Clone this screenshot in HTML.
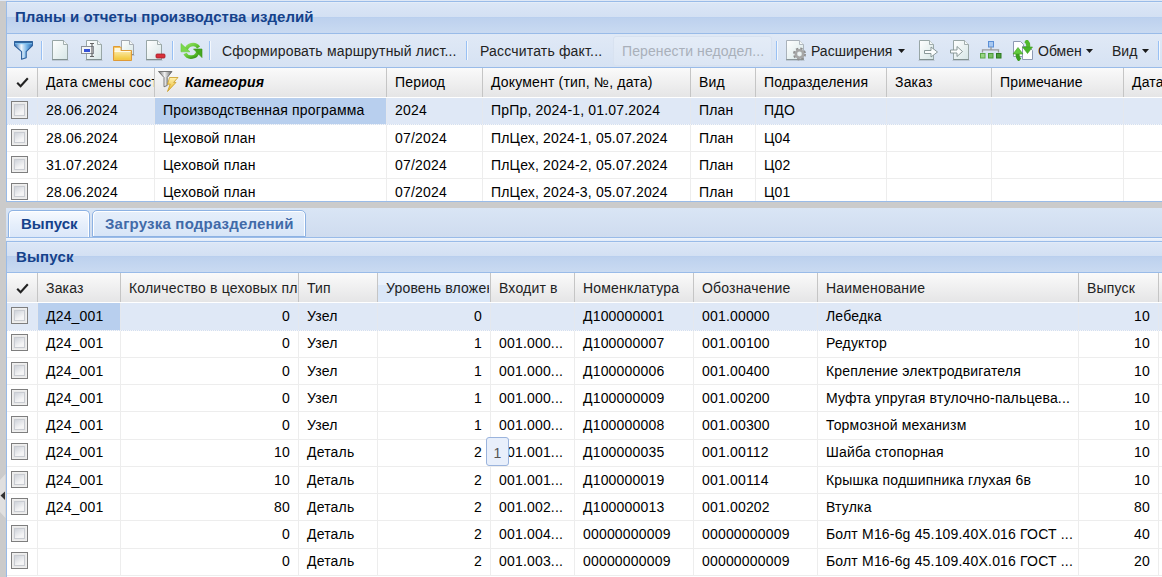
<!DOCTYPE html><html><head><meta charset="utf-8"><style>
*{margin:0;padding:0}
html,body{width:1162px;height:577px;overflow:hidden;background:#cbcbcb}
body{position:relative;font-family:"Liberation Sans",sans-serif}
body>div,body>svg{position:absolute}
.t{white-space:nowrap;font-size:14px;line-height:18px;letter-spacing:.18px}
.cb{width:17px;height:17px;box-sizing:border-box;border:1px solid #7e7e7e;background:#e9e9e9;box-shadow:inset 0 0 0 1px #efefef}.cb::after{content:'';position:absolute;left:2px;top:2px;right:2px;bottom:2px;box-sizing:border-box;border:1px solid #c9ccd2;background:linear-gradient(150deg,#cfd3da,#f4f4f5 70%)}
.tab{box-sizing:border-box;border:1px solid #8db2e3;border-radius:5px 5px 0 0;background:linear-gradient(to bottom,#e6effb,#d7e5f7);box-shadow:inset 1px 1px 0 #fff,inset -1px 0 0 #fff}
.tab.act{border-bottom:none;background:linear-gradient(to bottom,#f7faff 0,#e6effb 50%,#dbe7f9 100%)}
</style></head><body><div style="left:0px;top:0px;width:1162px;height:1px;background:#dfe8f6"></div>
<div style="left:6px;top:1px;width:1156px;height:1px;background:#99bbe8"></div>
<div style="left:6px;top:1px;width:1px;height:201px;background:#99bbe8"></div>
<div style="left:7px;top:2px;width:1155px;height:31px;background:linear-gradient(to bottom,#eef3fa 0,#dbe6f6 1px,#d3e0f3 15px,#b6cdee 15px,#bdd1ee 16px,#c9daf1 31px)"></div>
<div class="t" style="left:15px;top:7px;font-weight:bold;font-size:15px;color:#15428b;line-height:20px;letter-spacing:.06px">Планы и отчеты производства изделий</div>
<div style="left:7px;top:33px;width:1155px;height:1px;background:#99bbe8"></div>
<div style="left:7px;top:34px;width:1155px;height:33px;background:linear-gradient(to bottom,#e0e9f6,#d6e2f3)"></div>
<div style="left:7px;top:67px;width:1155px;height:1px;background:#99bbe8"></div>
<div style="left:41px;top:41px;width:1px;height:19px;background:#98c0f4"></div>
<div style="left:42px;top:41px;width:1px;height:19px;background:#f4f8fd"></div>
<div style="left:172px;top:41px;width:1px;height:19px;background:#98c0f4"></div>
<div style="left:173px;top:41px;width:1px;height:19px;background:#f4f8fd"></div>
<div style="left:209px;top:41px;width:1px;height:19px;background:#98c0f4"></div>
<div style="left:210px;top:41px;width:1px;height:19px;background:#f4f8fd"></div>
<div style="left:466px;top:41px;width:1px;height:19px;background:#98c0f4"></div>
<div style="left:467px;top:41px;width:1px;height:19px;background:#f4f8fd"></div>
<div style="left:776px;top:41px;width:1px;height:19px;background:#98c0f4"></div>
<div style="left:777px;top:41px;width:1px;height:19px;background:#f4f8fd"></div>
<div style="left:1158px;top:41px;width:1px;height:19px;background:#98c0f4"></div>
<div style="left:1159px;top:41px;width:1px;height:19px;background:#f4f8fd"></div>
<div style="left:613px;top:36px;width:159px;height:30px;background:linear-gradient(#e4ecf7,#dce6f4);border-radius:3px;box-sizing:border-box;border:1px solid #d8e2f0"></div>
<div class="t" style="left:222px;top:42px;font-size:14px;color:#222;line-height:18px">Сформировать маршрутный лист...</div>
<div class="t" style="left:480px;top:42px;font-size:14px;color:#222;line-height:18px">Рассчитать факт...</div>
<div class="t" style="left:622px;top:42px;font-size:14px;color:#a9b0ba;line-height:18px;letter-spacing:.1px">Перенести недодел...</div>
<div class="t" style="left:811px;top:42px;font-size:14px;color:#222;line-height:18px;letter-spacing:0">Расширения</div>
<div class="t" style="left:1038px;top:42px;font-size:14px;color:#222;line-height:18px;letter-spacing:0">Обмен</div>
<div class="t" style="left:1112px;top:42px;font-size:14px;color:#222;line-height:18px;letter-spacing:0">Вид</div>
<svg style="left:898px;top:49px" width="7" height="4" viewBox="0 0 7 4"><path d="M0,0 H7 L3.5,4 Z" fill="#1a1a1a"/></svg>
<svg style="left:1086px;top:49px" width="7" height="4" viewBox="0 0 7 4"><path d="M0,0 H7 L3.5,4 Z" fill="#1a1a1a"/></svg>
<svg style="left:1142px;top:49px" width="7" height="4" viewBox="0 0 7 4"><path d="M0,0 H7 L3.5,4 Z" fill="#1a1a1a"/></svg>
<svg style="left:0;top:0" width="0" height="0"><defs>
<linearGradient id="pg" x1="0" y1="0" x2="1" y2="1"><stop offset="0" stop-color="#ffffff"/><stop offset="1" stop-color="#d6e6e6"/></linearGradient>
<linearGradient id="fun" x1="0" y1="0" x2="1" y2="0"><stop offset="0" stop-color="#3f86c9"/><stop offset=".45" stop-color="#e8f3fb"/><stop offset="1" stop-color="#4a93d6"/></linearGradient>
<linearGradient id="fold" x1="0" y1="0" x2="0" y2="1"><stop offset="0" stop-color="#fbe9a8"/><stop offset="1" stop-color="#f1c83a"/></linearGradient>
<linearGradient id="grn" x1="0" y1="0" x2="1" y2="1"><stop offset="0" stop-color="#8fe36a"/><stop offset="1" stop-color="#2f9b14"/></linearGradient>
</defs></svg>
<svg style="left:12px;top:38px" width="24" height="24" viewBox="0 0 24 24"><defs><linearGradient id="fun2" x1="0" y1="0" x2="1" y2="0"><stop offset="0" stop-color="#2f6fb8"/><stop offset=".38" stop-color="#eef7fd"/><stop offset=".7" stop-color="#6fb0e6"/><stop offset="1" stop-color="#2c68ad"/></linearGradient></defs><path d="M2.6,3.6 H20.4 V7.6 L14.2,13.6 V19.8 L9.6,21.3 V13.6 L2.6,7.6 Z" fill="url(#fun2)" stroke="#2c5f9c" stroke-width="1.1" stroke-linejoin="round"/><rect x="3" y="3.6" width="17" height="1.6" fill="#33689f"/><rect x="3" y="5.2" width="17" height="1" fill="#7ec4f4"/></svg>
<svg style="left:52px;top:40px" width="17" height="22" viewBox="0 0 17 22"><path d="M0.5,0.5 H11.5 L15.5,4.5 V19.5 H0.5 Z" fill="url(#pg)" stroke="#98a6a6"/><path d="M11.5,0.5 V4.5 H15.5" fill="#f4f8f8" stroke="#98a6a6" stroke-width=".9"/><rect x="0" y="19" width="16" height="1.2" fill="#6f7d7d" opacity=".55"/><rect x="-1" y="20" width="18" height="1" fill="#000" opacity=".07"/></svg>
<svg style="left:81px;top:40px" width="22" height="22" viewBox="0 0 22 22"><path d="M5.5,0.5 H16.5 L20.5,4.5 V19.5 H5.5 Z" fill="url(#pg)" stroke="#98a6a6"/><path d="M16.5,0.5 V4.5 H20.5" fill="#f4f8f8" stroke="#98a6a6" stroke-width=".9"/><rect x="5" y="19" width="16" height="1.2" fill="#6f7d7d" opacity=".55"/><rect x="4" y="20" width="18" height="1" fill="#000" opacity=".07"/><rect x="0.5" y="6.5" width="12" height="7" fill="#f4f6f8" stroke="#8a8f96"/><rect x="3" y="9" width="6" height="3" fill="#3551d6"/><path d="M9,3.5 H13 M11,3.5 V16.5 M9,16.5 H13" stroke="#666" stroke-width="1.2"/></svg>
<svg style="left:112px;top:39px" width="24" height="23" viewBox="0 0 24 23"><path d="M9.5,1.5 H17.5 L21.5,5.5 V15.5 H9.5 Z" fill="url(#pg)" stroke="#a2a8b0"/><path d="M17.5,1.5 V5.5 H21.5" fill="#f4f8f8" stroke="#a2a8b0" stroke-width=".9"/><rect x="9" y="15" width="13" height="1.2" fill="#6f7d7d" opacity=".55"/><rect x="8" y="16" width="15" height="1" fill="#000" opacity=".07"/><path d="M1.5,7.5 H8 L9,8.5 V11.5 H19.5 V21.5 H1.5 Z" fill="#f6c35a" stroke="#de9a37"/><rect x="2.5" y="9" width="6" height="3" fill="#fff7dc"/><path d="M2.5,12 H18.5 V20.5 H2.5 Z" fill="url(#fold)"/><path d="M2.5,12.5 H18.5" stroke="#fffbe8" stroke-width="1"/></svg>
<svg style="left:146px;top:40px" width="20" height="22" viewBox="0 0 20 22"><path d="M0.5,0.5 H11.5 L15.5,4.5 V19.5 H0.5 Z" fill="url(#pg)" stroke="#98a6a6"/><path d="M11.5,0.5 V4.5 H15.5" fill="#f4f8f8" stroke="#98a6a6" stroke-width=".9"/><rect x="0" y="19" width="16" height="1.2" fill="#6f7d7d" opacity=".55"/><rect x="-1" y="20" width="18" height="1" fill="#000" opacity=".07"/><rect x="10" y="14" width="9" height="4" rx="1" fill="#d8303a" stroke="#a51f28" stroke-width=".8"/></svg>
<svg style="left:176px;top:38px" width="30" height="24" viewBox="0 0 30 24"><defs><linearGradient id="rf" x1="0" y1="0" x2="1" y2="1"><stop offset="0" stop-color="#8fe05e"/><stop offset=".6" stop-color="#5cc02e"/><stop offset="1" stop-color="#2f8d12"/></linearGradient></defs><path d="M10,12.5 A7,7 0 0 1 22.6,9.5" fill="none" stroke="url(#rf)" stroke-width="3.6"/><path d="M5,5.5 L5,13.8 L14,13.8 Z" fill="#7ad84c" stroke="#6cc93f" stroke-width=".6" stroke-linejoin="round"/><path d="M22,13.5 A7,7 0 0 1 9,15.5" fill="none" stroke="url(#rf)" stroke-width="3.6"/><path d="M17.5,11 L26,11 L26,19.6 Z" fill="#45a81e" stroke="#3a9416" stroke-width=".6" stroke-linejoin="round"/></svg>
<svg style="left:786px;top:40px" width="22" height="22" viewBox="0 0 22 22"><path d="M0.5,0.5 H13.5 L17.5,4.5 V19.5 H0.5 Z" fill="url(#pg)" stroke="#aab2ba"/><path d="M13.5,0.5 V4.5 H17.5" fill="#f4f8f8" stroke="#aab2ba" stroke-width=".9"/><rect x="0" y="19" width="18" height="1.2" fill="#6f7d7d" opacity=".55"/><rect x="-1" y="20" width="20" height="1" fill="#000" opacity=".07"/><circle cx="13.5" cy="14" r="5.2" fill="none" stroke="#8e8e8e" stroke-width="2.6" stroke-dasharray="2.2 1.9"/><circle cx="13.5" cy="14" r="3.7" fill="none" stroke="#a6a6a6" stroke-width="2.6"/><circle cx="13.5" cy="14" r="1.4" fill="#f2f2f2"/></svg>
<svg style="left:918px;top:40px" width="22" height="22" viewBox="0 0 22 22"><path d="M1.5,0.5 H11.5 L15.5,4.5 V19.5 H1.5 Z" fill="url(#pg)" stroke="#98a6a6"/><path d="M11.5,0.5 V4.5 H15.5" fill="#f4f8f8" stroke="#98a6a6" stroke-width=".9"/><rect x="1" y="19" width="15" height="1.2" fill="#6f7d7d" opacity=".55"/><rect x="0" y="20" width="17" height="1" fill="#000" opacity=".07"/><path d="M6.5,10.5 H13 V7 L19.5,12 L13,17 V13.5 H6.5 Z" fill="#fbfdfd" stroke="#7f8f8f" stroke-width=".9" stroke-linejoin="round"/></svg>
<svg style="left:949px;top:40px" width="22" height="22" viewBox="0 0 22 22"><path d="M4.5,0.5 H15.5 L19.5,4.5 V19.5 H4.5 Z" fill="url(#pg)" stroke="#98a6a6"/><path d="M15.5,0.5 V4.5 H19.5" fill="#f4f8f8" stroke="#98a6a6" stroke-width=".9"/><rect x="4" y="19" width="16" height="1.2" fill="#6f7d7d" opacity=".55"/><rect x="3" y="20" width="18" height="1" fill="#000" opacity=".07"/><path d="M1.5,10 H8 V6.5 L13.5,11.5 L8,16.5 V13 H1.5 Z" fill="#fbfdfd" stroke="#7f8f8f" stroke-width=".9" stroke-linejoin="round"/></svg>
<svg style="left:978px;top:40px" width="25" height="20" viewBox="0 0 25 20"><rect x="10.5" y="1.5" width="5" height="5.5" fill="#a8c8f0" stroke="#5b8fd6" stroke-width="1"/><path d="M13,7 V9.8 M4.5,12.5 V9.8 H20.5 V12.5" fill="none" stroke="#9a9a9a" stroke-width="1.3"/><rect x="2.5" y="13.5" width="4.5" height="4.5" fill="#9ad486" stroke="#5aa848" stroke-width="1"/><rect x="10.5" y="13.5" width="4.5" height="4.5" fill="#7cc066" stroke="#4a9a38" stroke-width="1"/><rect x="18.5" y="13.5" width="4.5" height="4.5" fill="#4f9e3d" stroke="#2c7a20" stroke-width="1"/></svg>
<svg style="left:1012px;top:40px" width="22" height="21" viewBox="0 0 22 21"><path d="M1.5,1.5 H8.5 L11.5,4.5 V16.5 H1.5 Z" fill="#fff" stroke="#8e9ab2"/><path d="M10.5,6.5 H16.5 L20.5,10.5 V19.5 H10.5 Z" fill="#fff" stroke="#8e9ab2"/><path d="M8,20 Q4.8,17.5 5.8,13" stroke="#3a9e1e" stroke-width="4" fill="none"/><path d="M1,14 L6,7.5 L11,14 Z" fill="#62cc3e" stroke="#3f9a22" stroke-width=".6" stroke-linejoin="round"/><path d="M13.5,0.5 Q17,3 16,7.5" stroke="#52b82e" stroke-width="4" fill="none"/><path d="M10.5,7 L15.5,13.5 L20.5,7 Z" fill="#48b528" stroke="#3f9a22" stroke-width=".6" stroke-linejoin="round"/></svg>
<div style="left:7px;top:68px;width:1155px;height:29px;background:linear-gradient(to bottom,#fafafa,#e5e5e6)"></div>
<div style="left:37px;top:68px;width:1px;height:29px;background:#c5c5c5"></div>
<div style="left:154px;top:68px;width:1px;height:29px;background:#c5c5c5"></div>
<div style="left:386px;top:68px;width:1px;height:29px;background:#c5c5c5"></div>
<div style="left:482px;top:68px;width:1px;height:29px;background:#c5c5c5"></div>
<div style="left:690px;top:68px;width:1px;height:29px;background:#c5c5c5"></div>
<div style="left:755px;top:68px;width:1px;height:29px;background:#c5c5c5"></div>
<div style="left:886px;top:68px;width:1px;height:29px;background:#c5c5c5"></div>
<div style="left:991px;top:68px;width:1px;height:29px;background:#c5c5c5"></div>
<div style="left:1123px;top:68px;width:1px;height:29px;background:#c5c5c5"></div>
<svg style="left:16px;top:77px" width="13" height="11" viewBox="0 0 13 11"><path d="M1.2,5.8 L4.6,9.2 L11.8,1.2" fill="none" stroke="#222" stroke-width="2.1"/></svg>
<div class="t" style="left:46px;top:73px;font-size:14px;color:#000;line-height:18px;width:108px;overflow:hidden;white-space:nowrap">Дата смены сост</div>
<svg style="left:156px;top:69px" width="24" height="24" viewBox="0 0 24 24"><defs><linearGradient id="hf" x1="0" y1="0" x2="1" y2="0"><stop offset="0" stop-color="#6a6a6a"/><stop offset=".45" stop-color="#f2f2f2"/><stop offset="1" stop-color="#5e5e5e"/></linearGradient><linearGradient id="lt" x1="0" y1="0" x2="0" y2="1"><stop offset="0" stop-color="#fff2b0"/><stop offset="1" stop-color="#e8b526"/></linearGradient></defs><path d="M2.5,2.5 H16 L11.2,8.5 V16.5 L8,17.8 V8.5 Z" fill="url(#hf)" stroke="#6b6b6b" stroke-width=".9" stroke-linejoin="round"/><path d="M13.5,8.5 H22 L17.6,13.4 H20 L11.5,22.5 L14.2,15.2 H11.6 Z" fill="url(#lt)" stroke="#c99a22" stroke-width=".8" stroke-linejoin="round"/></svg>
<div class="t" style="left:185px;top:73px;font-size:14px;color:#000;line-height:18px;font-weight:bold;font-style:italic">Категория</div>
<div class="t" style="left:395px;top:73px;font-size:14px;color:#000;line-height:18px">Период</div>
<div class="t" style="left:491px;top:73px;font-size:14px;color:#000;line-height:18px">Документ (тип, №, дата)</div>
<div class="t" style="left:699px;top:73px;font-size:14px;color:#000;line-height:18px">Вид</div>
<div class="t" style="left:764px;top:73px;font-size:14px;color:#000;line-height:18px">Подразделения</div>
<div class="t" style="left:895px;top:73px;font-size:14px;color:#000;line-height:18px">Заказ</div>
<div class="t" style="left:1000px;top:73px;font-size:14px;color:#000;line-height:18px">Примечание</div>
<div class="t" style="left:1132px;top:73px;font-size:14px;color:#000;line-height:18px">Дата</div>
<div style="left:7px;top:97px;width:1155px;height:104px;background:#fff"></div>
<div style="left:7px;top:98px;width:1155px;height:26px;background:#dfe8f6"></div>
<div style="left:155px;top:98px;width:231px;height:26px;background:#b8cfee"></div>
<div style="left:7px;top:124px;width:1155px;height:1px;background-image:repeating-linear-gradient(to right,#d3dff1 0,#d3dff1 1px,#f6f7f9 1px,#f6f7f9 2px)"></div>
<div style="left:37px;top:98px;width:1px;height:26px;background:#e4e8ef"></div>
<div style="left:154px;top:98px;width:1px;height:26px;background:#e4e8ef"></div>
<div style="left:386px;top:98px;width:1px;height:26px;background:#e4e8ef"></div>
<div style="left:482px;top:98px;width:1px;height:26px;background:#e4e8ef"></div>
<div style="left:690px;top:98px;width:1px;height:26px;background:#e4e8ef"></div>
<div style="left:755px;top:98px;width:1px;height:26px;background:#e4e8ef"></div>
<div style="left:886px;top:98px;width:1px;height:26px;background:#e4e8ef"></div>
<div style="left:991px;top:98px;width:1px;height:26px;background:#e4e8ef"></div>
<div style="left:1123px;top:98px;width:1px;height:26px;background:#e4e8ef"></div>
<div class="cb" style="left:11px;top:101px;height:18px"></div>
<div class="t" style="left:46px;top:101px;font-size:14px;color:#000;line-height:18px">28.06.2024</div>
<div class="t" style="left:163px;top:101px;font-size:14px;color:#000;line-height:18px">Производственная программа</div>
<div class="t" style="left:395px;top:101px;font-size:14px;color:#000;line-height:18px">2024</div>
<div class="t" style="left:491px;top:101px;font-size:14px;color:#000;line-height:18px">ПрПр, 2024-1, 01.07.2024</div>
<div class="t" style="left:699px;top:101px;font-size:14px;color:#000;line-height:18px">План</div>
<div class="t" style="left:764px;top:101px;font-size:14px;color:#000;line-height:18px">ПДО</div>
<div style="left:7px;top:151px;width:1155px;height:1px;background:#ededed"></div>
<div style="left:37px;top:125px;width:1px;height:26px;background:#ededed"></div>
<div style="left:154px;top:125px;width:1px;height:26px;background:#ededed"></div>
<div style="left:386px;top:125px;width:1px;height:26px;background:#ededed"></div>
<div style="left:482px;top:125px;width:1px;height:26px;background:#ededed"></div>
<div style="left:690px;top:125px;width:1px;height:26px;background:#ededed"></div>
<div style="left:755px;top:125px;width:1px;height:26px;background:#ededed"></div>
<div style="left:886px;top:125px;width:1px;height:26px;background:#ededed"></div>
<div style="left:991px;top:125px;width:1px;height:26px;background:#ededed"></div>
<div style="left:1123px;top:125px;width:1px;height:26px;background:#ededed"></div>
<div class="cb" style="left:11px;top:129px"></div>
<div class="t" style="left:46px;top:129px;font-size:14px;color:#000;line-height:18px">28.06.2024</div>
<div class="t" style="left:163px;top:129px;font-size:14px;color:#000;line-height:18px">Цеховой план</div>
<div class="t" style="left:395px;top:129px;font-size:14px;color:#000;line-height:18px">07/2024</div>
<div class="t" style="left:491px;top:129px;font-size:14px;color:#000;line-height:18px">ПлЦех, 2024-1, 05.07.2024</div>
<div class="t" style="left:699px;top:129px;font-size:14px;color:#000;line-height:18px">План</div>
<div class="t" style="left:764px;top:129px;font-size:14px;color:#000;line-height:18px">Ц04</div>
<div style="left:7px;top:178px;width:1155px;height:1px;background:#ededed"></div>
<div style="left:37px;top:152px;width:1px;height:26px;background:#ededed"></div>
<div style="left:154px;top:152px;width:1px;height:26px;background:#ededed"></div>
<div style="left:386px;top:152px;width:1px;height:26px;background:#ededed"></div>
<div style="left:482px;top:152px;width:1px;height:26px;background:#ededed"></div>
<div style="left:690px;top:152px;width:1px;height:26px;background:#ededed"></div>
<div style="left:755px;top:152px;width:1px;height:26px;background:#ededed"></div>
<div style="left:886px;top:152px;width:1px;height:26px;background:#ededed"></div>
<div style="left:991px;top:152px;width:1px;height:26px;background:#ededed"></div>
<div style="left:1123px;top:152px;width:1px;height:26px;background:#ededed"></div>
<div class="cb" style="left:11px;top:156px"></div>
<div class="t" style="left:46px;top:156px;font-size:14px;color:#000;line-height:18px">31.07.2024</div>
<div class="t" style="left:163px;top:156px;font-size:14px;color:#000;line-height:18px">Цеховой план</div>
<div class="t" style="left:395px;top:156px;font-size:14px;color:#000;line-height:18px">07/2024</div>
<div class="t" style="left:491px;top:156px;font-size:14px;color:#000;line-height:18px">ПлЦех, 2024-2, 05.07.2024</div>
<div class="t" style="left:699px;top:156px;font-size:14px;color:#000;line-height:18px">План</div>
<div class="t" style="left:764px;top:156px;font-size:14px;color:#000;line-height:18px">Ц02</div>
<div style="left:37px;top:179px;width:1px;height:22px;background:#ededed"></div>
<div style="left:154px;top:179px;width:1px;height:22px;background:#ededed"></div>
<div style="left:386px;top:179px;width:1px;height:22px;background:#ededed"></div>
<div style="left:482px;top:179px;width:1px;height:22px;background:#ededed"></div>
<div style="left:690px;top:179px;width:1px;height:22px;background:#ededed"></div>
<div style="left:755px;top:179px;width:1px;height:22px;background:#ededed"></div>
<div style="left:886px;top:179px;width:1px;height:22px;background:#ededed"></div>
<div style="left:991px;top:179px;width:1px;height:22px;background:#ededed"></div>
<div style="left:1123px;top:179px;width:1px;height:22px;background:#ededed"></div>
<div class="cb" style="left:11px;top:183px"></div>
<div class="t" style="left:46px;top:183px;font-size:14px;color:#000;line-height:18px">28.06.2024</div>
<div class="t" style="left:163px;top:183px;font-size:14px;color:#000;line-height:18px">Цеховой план</div>
<div class="t" style="left:395px;top:183px;font-size:14px;color:#000;line-height:18px">07/2024</div>
<div class="t" style="left:491px;top:183px;font-size:14px;color:#000;line-height:18px">ПлЦех, 2024-3, 05.07.2024</div>
<div class="t" style="left:699px;top:183px;font-size:14px;color:#000;line-height:18px">План</div>
<div class="t" style="left:764px;top:183px;font-size:14px;color:#000;line-height:18px">Ц01</div>
<div style="left:6px;top:201px;width:1156px;height:1px;background:#99bbe8"></div>
<div style="left:6px;top:208px;width:1156px;height:29px;background:linear-gradient(to bottom,#d9e5f5,#cfdcef)"></div>
<div style="left:6px;top:237px;width:1156px;height:1px;background:#99bbe8"></div>
<div style="left:6px;top:238px;width:1156px;height:3px;background:linear-gradient(#f0f5fc,#e1ebf9)"></div>
<div class="tab act" style="left:8px;top:210px;width:82px;height:27px"></div>
<div class="tab" style="left:92px;top:210px;width:214px;height:27px"></div>
<div class="t" style="left:21px;top:215px;font-weight:bold;font-size:15px;color:#15428b;line-height:18px;letter-spacing:0px">Выпуск</div>
<div class="t" style="left:105px;top:215px;font-weight:bold;font-size:15px;color:#416aa8;line-height:18px;letter-spacing:.2px">Загрузка подразделений</div>
<div style="left:6px;top:241px;width:1156px;height:1px;background:#99bbe8"></div>
<div style="left:6px;top:241px;width:1px;height:400px;background:#99bbe8"></div>
<div style="left:7px;top:242px;width:1155px;height:30px;background:linear-gradient(to bottom,#e9f0fa 0,#dbe6f6 1px,#d3e0f3 14px,#b6cdee 14px,#bdd1ee 15px,#c9daf1 30px)"></div>
<div class="t" style="left:16px;top:248px;font-weight:bold;font-size:15px;color:#15428b;line-height:18px">Выпуск</div>
<div style="left:7px;top:272px;width:1155px;height:1px;background:#99bbe8"></div>
<div style="left:7px;top:273px;width:1155px;height:29px;background:linear-gradient(to bottom,#fafafa,#e5e5e6)"></div>
<div style="left:378px;top:273px;width:112px;height:29px;background:linear-gradient(to bottom,#eef4fc 0,#e9f1fc 12px,#dae7f8 12px,#dae7f8 30px)"></div>
<div style="left:37px;top:273px;width:1px;height:29px;background:#c5c5c5"></div>
<div style="left:120px;top:273px;width:1px;height:29px;background:#c5c5c5"></div>
<div style="left:298px;top:273px;width:1px;height:29px;background:#c5c5c5"></div>
<div style="left:377px;top:273px;width:1px;height:29px;background:#c5c5c5"></div>
<div style="left:490px;top:273px;width:1px;height:29px;background:#c5c5c5"></div>
<div style="left:574px;top:273px;width:1px;height:29px;background:#c5c5c5"></div>
<div style="left:693px;top:273px;width:1px;height:29px;background:#c5c5c5"></div>
<div style="left:817px;top:273px;width:1px;height:29px;background:#c5c5c5"></div>
<div style="left:1078px;top:273px;width:1px;height:29px;background:#c5c5c5"></div>
<div style="left:1158px;top:273px;width:1px;height:29px;background:#c5c5c5"></div>
<svg style="left:16px;top:283px" width="13" height="11" viewBox="0 0 13 11"><path d="M1.2,5.8 L4.6,9.2 L11.8,1.2" fill="none" stroke="#222" stroke-width="2.1"/></svg>
<div class="t" style="left:46px;top:279px;font-size:14px;color:#222;line-height:18px;white-space:nowrap;overflow:hidden;width:70px">Заказ</div>
<div class="t" style="left:129px;top:279px;font-size:14px;color:#222;line-height:18px;white-space:nowrap;overflow:hidden;width:168px">Количество в цеховых планах</div>
<div class="t" style="left:307px;top:279px;font-size:14px;color:#222;line-height:18px;white-space:nowrap;overflow:hidden;width:60px">Тип</div>
<div class="t" style="left:386px;top:279px;font-size:14px;color:#222;line-height:18px;white-space:nowrap;overflow:hidden;width:103px">Уровень вложенности</div>
<div class="t" style="left:499px;top:279px;font-size:14px;color:#222;line-height:18px;white-space:nowrap;overflow:hidden;width:70px">Входит в</div>
<div class="t" style="left:583px;top:279px;font-size:14px;color:#222;line-height:18px;white-space:nowrap;overflow:hidden;width:100px">Номенклатура</div>
<div class="t" style="left:702px;top:279px;font-size:14px;color:#222;line-height:18px;white-space:nowrap;overflow:hidden;width:110px">Обозначение</div>
<div class="t" style="left:826px;top:279px;font-size:14px;color:#222;line-height:18px;white-space:nowrap;overflow:hidden;width:200px">Наименование</div>
<div class="t" style="left:1087px;top:279px;font-size:14px;color:#222;line-height:18px;white-space:nowrap;overflow:hidden;width:70px">Выпуск</div>
<div style="left:7px;top:302px;width:1155px;height:275px;background:#fff"></div>
<div style="left:7px;top:303px;width:1155px;height:27px;background:#dfe8f6"></div>
<div style="left:38px;top:303px;width:82px;height:27px;background:#b8cfee"></div>
<div style="left:7px;top:330px;width:1155px;height:1px;background-image:repeating-linear-gradient(to right,#d3dff1 0,#d3dff1 1px,#f6f7f9 1px,#f6f7f9 2px)"></div>
<div style="left:37px;top:303px;width:1px;height:27px;background:#e4e8ef"></div>
<div style="left:120px;top:303px;width:1px;height:27px;background:#e4e8ef"></div>
<div style="left:298px;top:303px;width:1px;height:27px;background:#e4e8ef"></div>
<div style="left:377px;top:303px;width:1px;height:27px;background:#e4e8ef"></div>
<div style="left:490px;top:303px;width:1px;height:27px;background:#e4e8ef"></div>
<div style="left:574px;top:303px;width:1px;height:27px;background:#e4e8ef"></div>
<div style="left:693px;top:303px;width:1px;height:27px;background:#e4e8ef"></div>
<div style="left:817px;top:303px;width:1px;height:27px;background:#e4e8ef"></div>
<div style="left:1078px;top:303px;width:1px;height:27px;background:#e4e8ef"></div>
<div style="left:1158px;top:303px;width:1px;height:27px;background:#e4e8ef"></div>
<div class="cb" style="left:11px;top:307px"></div>
<div class="t" style="left:46px;top:307px;font-size:14px;color:#000;line-height:18px">Д24_001</div>
<div class="t" style="left:121px;top:307px;width:169px;text-align:right;font-size:14px;color:#000;line-height:18px">0</div>
<div class="t" style="left:307px;top:307px;font-size:14px;color:#000;line-height:18px">Узел</div>
<div class="t" style="left:378px;top:307px;width:104px;text-align:right;font-size:14px;color:#000;line-height:18px">0</div>
<div class="t" style="left:499px;top:307px;font-size:14px;color:#000;line-height:18px"></div>
<div class="t" style="left:583px;top:307px;font-size:14px;color:#000;line-height:18px">Д100000001</div>
<div class="t" style="left:702px;top:307px;font-size:14px;color:#000;line-height:18px">001.00000</div>
<div class="t" style="left:826px;top:307px;font-size:14px;color:#000;line-height:18px">Лебедка</div>
<div class="t" style="left:1079px;top:307px;width:71px;text-align:right;font-size:14px;color:#000;line-height:18px">10</div>
<div style="left:7px;top:357px;width:1155px;height:1px;background:#ededed"></div>
<div style="left:37px;top:331px;width:1px;height:26px;background:#ededed"></div>
<div style="left:120px;top:331px;width:1px;height:26px;background:#ededed"></div>
<div style="left:298px;top:331px;width:1px;height:26px;background:#ededed"></div>
<div style="left:377px;top:331px;width:1px;height:26px;background:#ededed"></div>
<div style="left:490px;top:331px;width:1px;height:26px;background:#ededed"></div>
<div style="left:574px;top:331px;width:1px;height:26px;background:#ededed"></div>
<div style="left:693px;top:331px;width:1px;height:26px;background:#ededed"></div>
<div style="left:817px;top:331px;width:1px;height:26px;background:#ededed"></div>
<div style="left:1078px;top:331px;width:1px;height:26px;background:#ededed"></div>
<div style="left:1158px;top:331px;width:1px;height:26px;background:#ededed"></div>
<div class="cb" style="left:11px;top:334px"></div>
<div class="t" style="left:46px;top:334px;font-size:14px;color:#000;line-height:18px">Д24_001</div>
<div class="t" style="left:121px;top:334px;width:169px;text-align:right;font-size:14px;color:#000;line-height:18px">0</div>
<div class="t" style="left:307px;top:334px;font-size:14px;color:#000;line-height:18px">Узел</div>
<div class="t" style="left:378px;top:334px;width:104px;text-align:right;font-size:14px;color:#000;line-height:18px">1</div>
<div class="t" style="left:499px;top:334px;font-size:14px;color:#000;line-height:18px">001.000...</div>
<div class="t" style="left:583px;top:334px;font-size:14px;color:#000;line-height:18px">Д100000007</div>
<div class="t" style="left:702px;top:334px;font-size:14px;color:#000;line-height:18px">001.00100</div>
<div class="t" style="left:826px;top:334px;font-size:14px;color:#000;line-height:18px">Редуктор</div>
<div class="t" style="left:1079px;top:334px;width:71px;text-align:right;font-size:14px;color:#000;line-height:18px">10</div>
<div style="left:7px;top:384px;width:1155px;height:1px;background:#ededed"></div>
<div style="left:37px;top:358px;width:1px;height:26px;background:#ededed"></div>
<div style="left:120px;top:358px;width:1px;height:26px;background:#ededed"></div>
<div style="left:298px;top:358px;width:1px;height:26px;background:#ededed"></div>
<div style="left:377px;top:358px;width:1px;height:26px;background:#ededed"></div>
<div style="left:490px;top:358px;width:1px;height:26px;background:#ededed"></div>
<div style="left:574px;top:358px;width:1px;height:26px;background:#ededed"></div>
<div style="left:693px;top:358px;width:1px;height:26px;background:#ededed"></div>
<div style="left:817px;top:358px;width:1px;height:26px;background:#ededed"></div>
<div style="left:1078px;top:358px;width:1px;height:26px;background:#ededed"></div>
<div style="left:1158px;top:358px;width:1px;height:26px;background:#ededed"></div>
<div class="cb" style="left:11px;top:362px"></div>
<div class="t" style="left:46px;top:362px;font-size:14px;color:#000;line-height:18px">Д24_001</div>
<div class="t" style="left:121px;top:362px;width:169px;text-align:right;font-size:14px;color:#000;line-height:18px">0</div>
<div class="t" style="left:307px;top:362px;font-size:14px;color:#000;line-height:18px">Узел</div>
<div class="t" style="left:378px;top:362px;width:104px;text-align:right;font-size:14px;color:#000;line-height:18px">1</div>
<div class="t" style="left:499px;top:362px;font-size:14px;color:#000;line-height:18px">001.000...</div>
<div class="t" style="left:583px;top:362px;font-size:14px;color:#000;line-height:18px">Д100000006</div>
<div class="t" style="left:702px;top:362px;font-size:14px;color:#000;line-height:18px">001.00400</div>
<div class="t" style="left:826px;top:362px;font-size:14px;color:#000;line-height:18px">Крепление электродвигателя</div>
<div class="t" style="left:1079px;top:362px;width:71px;text-align:right;font-size:14px;color:#000;line-height:18px">10</div>
<div style="left:7px;top:411px;width:1155px;height:1px;background:#ededed"></div>
<div style="left:37px;top:385px;width:1px;height:26px;background:#ededed"></div>
<div style="left:120px;top:385px;width:1px;height:26px;background:#ededed"></div>
<div style="left:298px;top:385px;width:1px;height:26px;background:#ededed"></div>
<div style="left:377px;top:385px;width:1px;height:26px;background:#ededed"></div>
<div style="left:490px;top:385px;width:1px;height:26px;background:#ededed"></div>
<div style="left:574px;top:385px;width:1px;height:26px;background:#ededed"></div>
<div style="left:693px;top:385px;width:1px;height:26px;background:#ededed"></div>
<div style="left:817px;top:385px;width:1px;height:26px;background:#ededed"></div>
<div style="left:1078px;top:385px;width:1px;height:26px;background:#ededed"></div>
<div style="left:1158px;top:385px;width:1px;height:26px;background:#ededed"></div>
<div class="cb" style="left:11px;top:389px"></div>
<div class="t" style="left:46px;top:389px;font-size:14px;color:#000;line-height:18px">Д24_001</div>
<div class="t" style="left:121px;top:389px;width:169px;text-align:right;font-size:14px;color:#000;line-height:18px">0</div>
<div class="t" style="left:307px;top:389px;font-size:14px;color:#000;line-height:18px">Узел</div>
<div class="t" style="left:378px;top:389px;width:104px;text-align:right;font-size:14px;color:#000;line-height:18px">1</div>
<div class="t" style="left:499px;top:389px;font-size:14px;color:#000;line-height:18px">001.000...</div>
<div class="t" style="left:583px;top:389px;font-size:14px;color:#000;line-height:18px">Д100000009</div>
<div class="t" style="left:702px;top:389px;font-size:14px;color:#000;line-height:18px">001.00200</div>
<div class="t" style="left:826px;top:389px;font-size:14px;color:#000;line-height:18px">Муфта упругая втулочно-пальцева...</div>
<div class="t" style="left:1079px;top:389px;width:71px;text-align:right;font-size:14px;color:#000;line-height:18px">10</div>
<div style="left:7px;top:439px;width:1155px;height:1px;background:#ededed"></div>
<div style="left:37px;top:412px;width:1px;height:27px;background:#ededed"></div>
<div style="left:120px;top:412px;width:1px;height:27px;background:#ededed"></div>
<div style="left:298px;top:412px;width:1px;height:27px;background:#ededed"></div>
<div style="left:377px;top:412px;width:1px;height:27px;background:#ededed"></div>
<div style="left:490px;top:412px;width:1px;height:27px;background:#ededed"></div>
<div style="left:574px;top:412px;width:1px;height:27px;background:#ededed"></div>
<div style="left:693px;top:412px;width:1px;height:27px;background:#ededed"></div>
<div style="left:817px;top:412px;width:1px;height:27px;background:#ededed"></div>
<div style="left:1078px;top:412px;width:1px;height:27px;background:#ededed"></div>
<div style="left:1158px;top:412px;width:1px;height:27px;background:#ededed"></div>
<div class="cb" style="left:11px;top:416px"></div>
<div class="t" style="left:46px;top:416px;font-size:14px;color:#000;line-height:18px">Д24_001</div>
<div class="t" style="left:121px;top:416px;width:169px;text-align:right;font-size:14px;color:#000;line-height:18px">0</div>
<div class="t" style="left:307px;top:416px;font-size:14px;color:#000;line-height:18px">Узел</div>
<div class="t" style="left:378px;top:416px;width:104px;text-align:right;font-size:14px;color:#000;line-height:18px">1</div>
<div class="t" style="left:499px;top:416px;font-size:14px;color:#000;line-height:18px">001.000...</div>
<div class="t" style="left:583px;top:416px;font-size:14px;color:#000;line-height:18px">Д100000008</div>
<div class="t" style="left:702px;top:416px;font-size:14px;color:#000;line-height:18px">001.00300</div>
<div class="t" style="left:826px;top:416px;font-size:14px;color:#000;line-height:18px">Тормозной механизм</div>
<div class="t" style="left:1079px;top:416px;width:71px;text-align:right;font-size:14px;color:#000;line-height:18px">10</div>
<div style="left:7px;top:466px;width:1155px;height:1px;background:#ededed"></div>
<div style="left:37px;top:440px;width:1px;height:26px;background:#ededed"></div>
<div style="left:120px;top:440px;width:1px;height:26px;background:#ededed"></div>
<div style="left:298px;top:440px;width:1px;height:26px;background:#ededed"></div>
<div style="left:377px;top:440px;width:1px;height:26px;background:#ededed"></div>
<div style="left:490px;top:440px;width:1px;height:26px;background:#ededed"></div>
<div style="left:574px;top:440px;width:1px;height:26px;background:#ededed"></div>
<div style="left:693px;top:440px;width:1px;height:26px;background:#ededed"></div>
<div style="left:817px;top:440px;width:1px;height:26px;background:#ededed"></div>
<div style="left:1078px;top:440px;width:1px;height:26px;background:#ededed"></div>
<div style="left:1158px;top:440px;width:1px;height:26px;background:#ededed"></div>
<div class="cb" style="left:11px;top:443px"></div>
<div class="t" style="left:46px;top:443px;font-size:14px;color:#000;line-height:18px">Д24_001</div>
<div class="t" style="left:121px;top:443px;width:169px;text-align:right;font-size:14px;color:#000;line-height:18px">10</div>
<div class="t" style="left:307px;top:443px;font-size:14px;color:#000;line-height:18px">Деталь</div>
<div class="t" style="left:378px;top:443px;width:104px;text-align:right;font-size:14px;color:#000;line-height:18px">2</div>
<div class="t" style="left:499px;top:443px;font-size:14px;color:#000;line-height:18px">001.001...</div>
<div class="t" style="left:583px;top:443px;font-size:14px;color:#000;line-height:18px">Д100000035</div>
<div class="t" style="left:702px;top:443px;font-size:14px;color:#000;line-height:18px">001.00112</div>
<div class="t" style="left:826px;top:443px;font-size:14px;color:#000;line-height:18px">Шайба стопорная</div>
<div class="t" style="left:1079px;top:443px;width:71px;text-align:right;font-size:14px;color:#000;line-height:18px">10</div>
<div style="left:7px;top:493px;width:1155px;height:1px;background:#ededed"></div>
<div style="left:37px;top:467px;width:1px;height:26px;background:#ededed"></div>
<div style="left:120px;top:467px;width:1px;height:26px;background:#ededed"></div>
<div style="left:298px;top:467px;width:1px;height:26px;background:#ededed"></div>
<div style="left:377px;top:467px;width:1px;height:26px;background:#ededed"></div>
<div style="left:490px;top:467px;width:1px;height:26px;background:#ededed"></div>
<div style="left:574px;top:467px;width:1px;height:26px;background:#ededed"></div>
<div style="left:693px;top:467px;width:1px;height:26px;background:#ededed"></div>
<div style="left:817px;top:467px;width:1px;height:26px;background:#ededed"></div>
<div style="left:1078px;top:467px;width:1px;height:26px;background:#ededed"></div>
<div style="left:1158px;top:467px;width:1px;height:26px;background:#ededed"></div>
<div class="cb" style="left:11px;top:471px"></div>
<div class="t" style="left:46px;top:471px;font-size:14px;color:#000;line-height:18px">Д24_001</div>
<div class="t" style="left:121px;top:471px;width:169px;text-align:right;font-size:14px;color:#000;line-height:18px">10</div>
<div class="t" style="left:307px;top:471px;font-size:14px;color:#000;line-height:18px">Деталь</div>
<div class="t" style="left:378px;top:471px;width:104px;text-align:right;font-size:14px;color:#000;line-height:18px">2</div>
<div class="t" style="left:499px;top:471px;font-size:14px;color:#000;line-height:18px">001.001...</div>
<div class="t" style="left:583px;top:471px;font-size:14px;color:#000;line-height:18px">Д100000019</div>
<div class="t" style="left:702px;top:471px;font-size:14px;color:#000;line-height:18px">001.00114</div>
<div class="t" style="left:826px;top:471px;font-size:14px;color:#000;line-height:18px">Крышка подшипника глухая 6в</div>
<div class="t" style="left:1079px;top:471px;width:71px;text-align:right;font-size:14px;color:#000;line-height:18px">10</div>
<div style="left:7px;top:520px;width:1155px;height:1px;background:#ededed"></div>
<div style="left:37px;top:494px;width:1px;height:26px;background:#ededed"></div>
<div style="left:120px;top:494px;width:1px;height:26px;background:#ededed"></div>
<div style="left:298px;top:494px;width:1px;height:26px;background:#ededed"></div>
<div style="left:377px;top:494px;width:1px;height:26px;background:#ededed"></div>
<div style="left:490px;top:494px;width:1px;height:26px;background:#ededed"></div>
<div style="left:574px;top:494px;width:1px;height:26px;background:#ededed"></div>
<div style="left:693px;top:494px;width:1px;height:26px;background:#ededed"></div>
<div style="left:817px;top:494px;width:1px;height:26px;background:#ededed"></div>
<div style="left:1078px;top:494px;width:1px;height:26px;background:#ededed"></div>
<div style="left:1158px;top:494px;width:1px;height:26px;background:#ededed"></div>
<div class="cb" style="left:11px;top:498px"></div>
<div class="t" style="left:46px;top:498px;font-size:14px;color:#000;line-height:18px">Д24_001</div>
<div class="t" style="left:121px;top:498px;width:169px;text-align:right;font-size:14px;color:#000;line-height:18px">80</div>
<div class="t" style="left:307px;top:498px;font-size:14px;color:#000;line-height:18px">Деталь</div>
<div class="t" style="left:378px;top:498px;width:104px;text-align:right;font-size:14px;color:#000;line-height:18px">2</div>
<div class="t" style="left:499px;top:498px;font-size:14px;color:#000;line-height:18px">001.002...</div>
<div class="t" style="left:583px;top:498px;font-size:14px;color:#000;line-height:18px">Д100000013</div>
<div class="t" style="left:702px;top:498px;font-size:14px;color:#000;line-height:18px">001.00202</div>
<div class="t" style="left:826px;top:498px;font-size:14px;color:#000;line-height:18px">Втулка</div>
<div class="t" style="left:1079px;top:498px;width:71px;text-align:right;font-size:14px;color:#000;line-height:18px">80</div>
<div style="left:7px;top:548px;width:1155px;height:1px;background:#ededed"></div>
<div style="left:37px;top:521px;width:1px;height:27px;background:#ededed"></div>
<div style="left:120px;top:521px;width:1px;height:27px;background:#ededed"></div>
<div style="left:298px;top:521px;width:1px;height:27px;background:#ededed"></div>
<div style="left:377px;top:521px;width:1px;height:27px;background:#ededed"></div>
<div style="left:490px;top:521px;width:1px;height:27px;background:#ededed"></div>
<div style="left:574px;top:521px;width:1px;height:27px;background:#ededed"></div>
<div style="left:693px;top:521px;width:1px;height:27px;background:#ededed"></div>
<div style="left:817px;top:521px;width:1px;height:27px;background:#ededed"></div>
<div style="left:1078px;top:521px;width:1px;height:27px;background:#ededed"></div>
<div style="left:1158px;top:521px;width:1px;height:27px;background:#ededed"></div>
<div class="cb" style="left:11px;top:525px"></div>
<div class="t" style="left:46px;top:525px;font-size:14px;color:#000;line-height:18px"></div>
<div class="t" style="left:121px;top:525px;width:169px;text-align:right;font-size:14px;color:#000;line-height:18px">0</div>
<div class="t" style="left:307px;top:525px;font-size:14px;color:#000;line-height:18px">Деталь</div>
<div class="t" style="left:378px;top:525px;width:104px;text-align:right;font-size:14px;color:#000;line-height:18px">2</div>
<div class="t" style="left:499px;top:525px;font-size:14px;color:#000;line-height:18px">001.004...</div>
<div class="t" style="left:583px;top:525px;font-size:14px;color:#000;line-height:18px">00000000009</div>
<div class="t" style="left:702px;top:525px;font-size:14px;color:#000;line-height:18px">00000000009</div>
<div class="t" style="left:826px;top:525px;font-size:14px;color:#000;line-height:18px">Болт М16-6g 45.109.40X.016 ГОСТ ...</div>
<div class="t" style="left:1079px;top:525px;width:71px;text-align:right;font-size:14px;color:#000;line-height:18px">40</div>
<div style="left:7px;top:575px;width:1155px;height:1px;background:#ededed"></div>
<div style="left:37px;top:549px;width:1px;height:26px;background:#ededed"></div>
<div style="left:120px;top:549px;width:1px;height:26px;background:#ededed"></div>
<div style="left:298px;top:549px;width:1px;height:26px;background:#ededed"></div>
<div style="left:377px;top:549px;width:1px;height:26px;background:#ededed"></div>
<div style="left:490px;top:549px;width:1px;height:26px;background:#ededed"></div>
<div style="left:574px;top:549px;width:1px;height:26px;background:#ededed"></div>
<div style="left:693px;top:549px;width:1px;height:26px;background:#ededed"></div>
<div style="left:817px;top:549px;width:1px;height:26px;background:#ededed"></div>
<div style="left:1078px;top:549px;width:1px;height:26px;background:#ededed"></div>
<div style="left:1158px;top:549px;width:1px;height:26px;background:#ededed"></div>
<div class="cb" style="left:11px;top:552px"></div>
<div class="t" style="left:46px;top:552px;font-size:14px;color:#000;line-height:18px"></div>
<div class="t" style="left:121px;top:552px;width:169px;text-align:right;font-size:14px;color:#000;line-height:18px">0</div>
<div class="t" style="left:307px;top:552px;font-size:14px;color:#000;line-height:18px">Деталь</div>
<div class="t" style="left:378px;top:552px;width:104px;text-align:right;font-size:14px;color:#000;line-height:18px">2</div>
<div class="t" style="left:499px;top:552px;font-size:14px;color:#000;line-height:18px">001.003...</div>
<div class="t" style="left:583px;top:552px;font-size:14px;color:#000;line-height:18px">00000000009</div>
<div class="t" style="left:702px;top:552px;font-size:14px;color:#000;line-height:18px">00000000009</div>
<div class="t" style="left:826px;top:552px;font-size:14px;color:#000;line-height:18px">Болт М16-6g 45.109.40X.016 ГОСТ ...</div>
<div class="t" style="left:1079px;top:552px;width:71px;text-align:right;font-size:14px;color:#000;line-height:18px">20</div>
<div style="left:486px;top:437px;width:23px;height:29px;box-sizing:border-box;border:1px solid #9bb4dd;border-radius:3px;background:#e8effb"></div>
<div class="t" style="left:486px;top:444px;width:23px;text-align:center;font-size:14px;color:#555;line-height:18px">1</div>
<svg style="left:0px;top:474px" width="6" height="44" viewBox="0 0 6 44"><path d="M0,6 L5.5,0 V44 L0,38 Z" fill="#e0e0e0"/><path d="M0.5,21.5 L5,17.5 V26 Z" fill="#333"/></svg></body></html>
